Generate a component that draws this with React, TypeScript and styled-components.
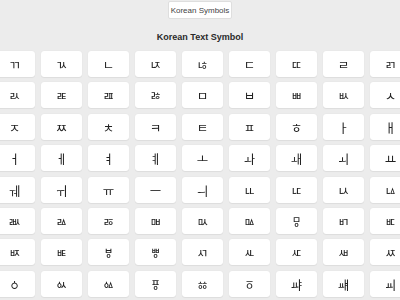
import React from "react";
import styled, { createGlobalStyle } from "styled-components";

const Global = createGlobalStyle`
  html, body {
    margin: 0;
    padding: 0;
    background: #ececec;
    overflow: hidden;
  }
  body {
    font-family: "Liberation Sans", Arial, sans-serif;
  }
`;

const Page = styled.div`
  width: 400px;
  height: 300px;
  overflow: hidden;
  display: flex;
  flex-direction: column;
  align-items: center;
  & > * {
    flex: none;
  }
`;

const TopButton = styled.button`
  margin-top: 1px;
  box-sizing: border-box;
  height: 18px;
  width: 64px;
  padding: 0;
  background: #ffffff;
  border: 1px solid #dedede;
  border-radius: 2px;
  font-family: "Liberation Sans", Arial, sans-serif;
  font-size: 8px;
  color: #444;
  display: flex;
  align-items: center;
  justify-content: center;
`;

const Title = styled.h1`
  margin: 12px 0 0;
  font-size: 9px;
  line-height: 12px;
  font-weight: bold;
  color: #2a2a2a;
`;

const GridWrap = styled.div`
  margin-top: 8px;
  width: 400px;
  padding-left: 4px;
  box-sizing: border-box;
  display: flex;
  justify-content: center;
`;

const Grid = styled.div`
  flex: none;
  display: grid;
  grid-template-columns: repeat(11, 41px);
  column-gap: 6px;
  row-gap: 5.4px;
`;

const Cell = styled.div`
  height: 26px;
  background: #ffffff;
  border-radius: 3px;
  box-shadow: 0 0 1px rgba(0, 0, 0, 0.12), 0 1px 1px rgba(0, 0, 0, 0.06);
  display: flex;
  align-items: center;
  justify-content: center;
  font-family: "Noto Sans CJK KR", "Noto Sans", sans-serif;
  font-size: 12.5px;
  color: #222;
  will-change: transform;
`;

const chars: string[] = [];
for (let c = 0x3131; c <= 0x318e; c++) {
  if (c === 0x3163 || c === 0x3164) continue;
  chars.push(String.fromCharCode(c));
}

export default function App() {
  return (
    <>
      <Global />
      <Page>
        <TopButton>Korean Symbols</TopButton>
        <Title>Korean Text Symbol</Title>
        <GridWrap>
          <Grid>
            {chars.map((ch, i) => (
              <Cell key={i}>{ch}</Cell>
            ))}
          </Grid>
        </GridWrap>
      </Page>
    </>
  );
}
